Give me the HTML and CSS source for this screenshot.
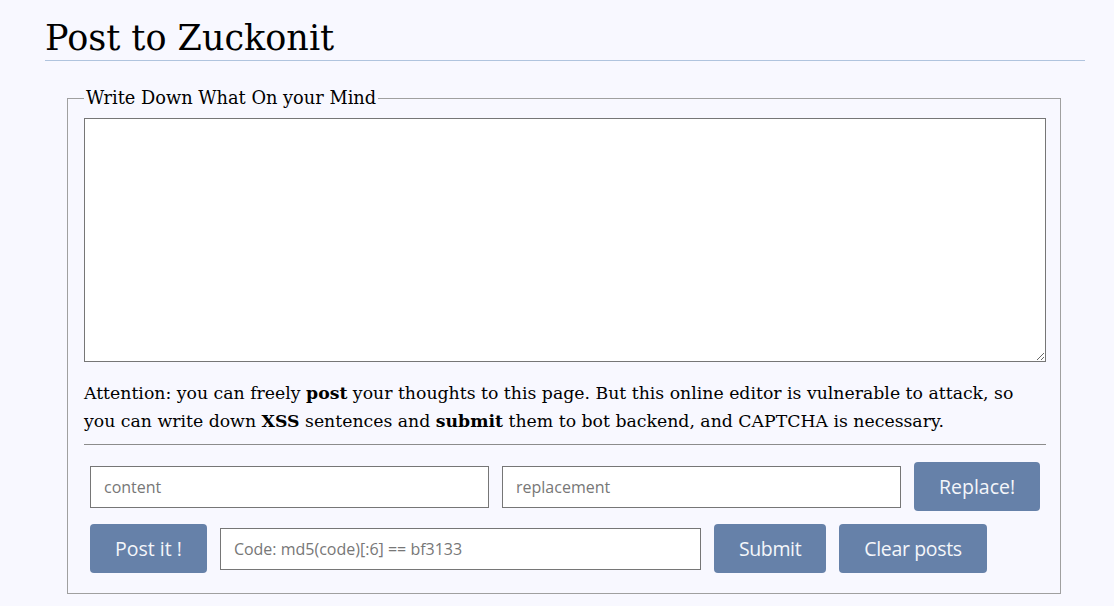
FILE: index.html
```html
<!DOCTYPE html>
<html lang="en">
<head>
<meta charset="utf-8">
<title>Post to Zuckonit</title>
<link rel="stylesheet" href="styles.css">
</head>
<body>
<div class="page">
  <h1 class="title">Post to Zuckonit</h1>
  <fieldset class="box">
    <legend class="legend">Write Down What On your Mind</legend>
    <textarea class="editor"></textarea>
    <p class="note">Attention: you can freely <b>post</b> your thoughts to this page. But this online editor is vulnerable to attack, so you can write down <b>XSS</b> sentences and <b>submit</b> them to bot backend, and CAPTCHA is necessary.</p>
    <hr class="rule">
    <div class="controls">
      <div class="row">
        <input class="field field-half" type="text" placeholder="content">
        <input class="field field-half" type="text" placeholder="replacement">
        <button class="btn" type="button">Replace!</button>
      </div>
      <div class="row">
        <button class="btn" type="button">Post it !</button>
        <input class="field field-code" type="text" placeholder="Code: md5(code)[:6] == bf3133">
        <button class="btn btn-tight" type="button">Submit</button>
        <button class="btn btn-tight" type="button">Clear posts</button>
      </div>
    </div>
  </fieldset>
</div>
</body>
</html>
```
FILE: styles.css
```css
html, body {
  margin: 0;
  background: #f8f8ff;
}
body {
  font-family: "DejaVu Serif", Georgia, serif;
  color: #000;
}
.page {
  padding: 0 29px 0 45px;
}
.title {
  margin: 16px 0 0;
  font-size: 35px;
  line-height: 44px;
  font-weight: normal;
  border-bottom: 1px solid #b0c4de;
}
.box {
  margin: 25px 24px 0 22px;
  padding: 0 14px 20px 16px;
  border: 1px solid #a0a0a0;
}
.legend {
  padding: 0 2px;
  font-size: 17.8px;
  line-height: 24px;
}
.editor {
  display: block;
  box-sizing: border-box;
  width: 100%;
  height: 244px;
  margin: 8px 0 0;
  border: 1px solid #767676;
  background: #fff;
  resize: both;
}
.note {
  margin: 17px 0 0;
  font-size: 17.3px;
  line-height: 28px;
}
.rule {
  margin: 9px 0 0;
  border: 0;
  border-top: 1px solid #8c8c8c;
  height: 0;
}
.controls {
  padding: 17px 0 0 6px;
  display: flex;
  flex-direction: column;
  gap: 13px;
}
.row {
  display: flex;
  align-items: center;
  gap: 13px;
}
.field {
  box-sizing: border-box;
  height: 42px;
  margin: 0;
  padding: 0 13px;
  border: 1px solid #767676;
  background: #fff;
  font-family: "Open Sans", "Noto Sans", sans-serif;
  font-size: 16px;
  color: #333;
  outline: none;
}
.field::placeholder {
  color: #777;
}
.field-half {
  width: 399px;
}
.field-code {
  width: 481px;
}
.btn {
  box-sizing: border-box;
  height: 49px;
  margin: 0;
  padding: 0 25px;
  border: 0;
  border-radius: 4px;
  background: #6681a9;
  color: #f4f6fa;
  font-family: "Open Sans", "Noto Sans", sans-serif;
  font-size: 19.5px;
  cursor: pointer;
}
.btn-tight {
  letter-spacing: -0.35px;
}
```
